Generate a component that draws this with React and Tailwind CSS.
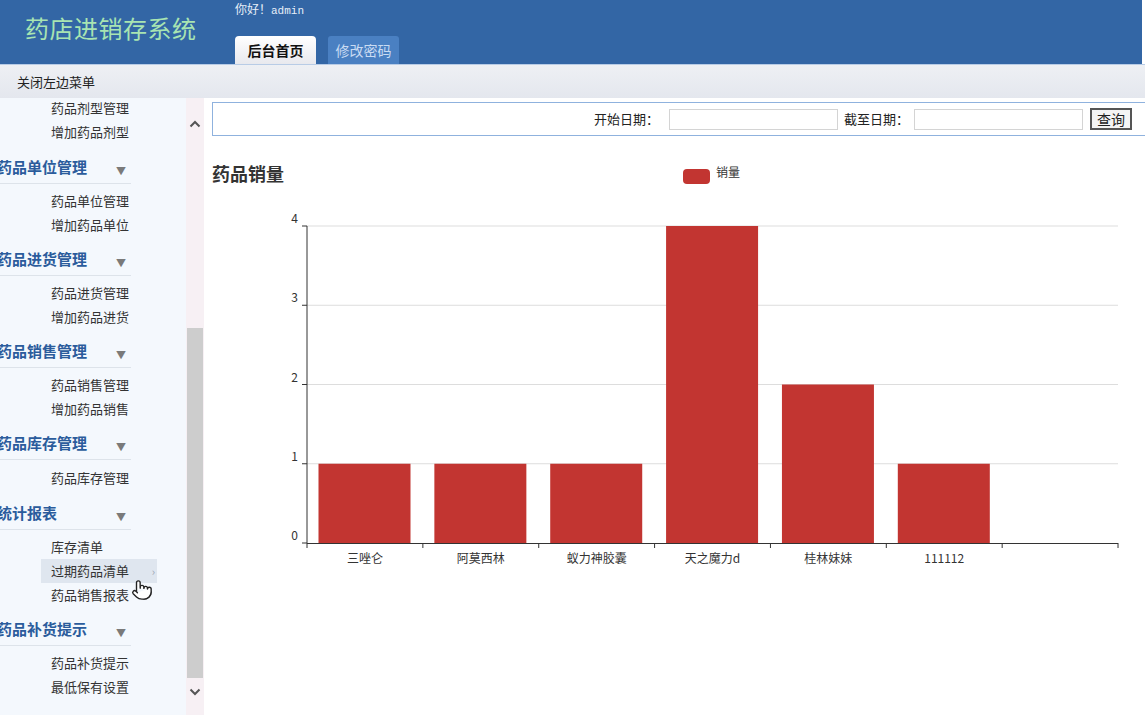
import React from "react";
import { Pointer } from "lucide-react";

const menu = [
    { title: null, items: ["药品剂型管理", "增加药品剂型"] },
    { title: "药品单位管理", items: ["药品单位管理", "增加药品单位"] },
    { title: "药品进货管理", items: ["药品进货管理", "增加药品进货"] },
    { title: "药品销售管理", items: ["药品销售管理", "增加药品销售"] },
    { title: "药品库存管理", items: ["药品库存管理"] },
    { title: "统计报表", items: ["库存清单", "过期药品清单", "药品销售报表"] },
    { title: "药品补货提示", items: ["药品补货提示", "最低保有设置"] },
];

const sales = [
    { name: "三唑仑", value: 1 },
    { name: "阿莫西林", value: 1 },
    { name: "蚁力神胶囊", value: 1 },
    { name: "天之魔力d", value: 4 },
    { name: "桂林妹妹", value: 2 },
    { name: "111112", value: 1 },
];

const font = { fontFamily: '"Noto Sans CJK SC", "Noto Sans", sans-serif' };

const SalesChart = () => {
    const x0 = 95;
    const y0 = 407;
    const step = 115.86;
    const unit = 79.25;
    const right = 906;

    return (
        <svg width="933" height="470" viewBox="0 0 933 470" fontFamily='"Noto Sans CJK SC", "Noto Sans", sans-serif'>
            <text x="0" y="45" fontSize="18" fontWeight="700" fill="#333">药品销量</text>

            {/* legend */}
            <rect x="471" y="33" width="27" height="15" rx="4" fill="#c23531" />
            <text x="504" y="41" fontSize="12" fill="#333">销量</text>

            {/* grid + y labels */}
            {[0, 1, 2, 3, 4].map((v) => {
                const y = y0 - v * unit;
                return (
                    <g key={v}>
                        {v > 0 && <line x1={x0} x2={right} y1={y} y2={y} stroke="#ddd" strokeWidth="1" />}
                        <line x1={x0 - 5} x2={x0} y1={y} y2={y} stroke="#333" strokeWidth="1" />
                        <text x={x0 - 9} y={y - 3} fontSize="12" fill="#333" textAnchor="end">{v}</text>
                    </g>
                );
            })}

            {/* bars */}
            {sales.map((s, i) => (
                <rect
                    key={s.name}
                    x={x0 + i * step + 11.5}
                    y={y0 - s.value * unit}
                    width="92"
                    height={s.value * unit}
                    fill="#c23531"
                />
            ))}

            {/* axes */}
            <line x1={x0} x2={x0} y1={y0 - 4 * unit} y2={y0} stroke="#333" strokeWidth="1" />
            <line x1={x0} x2={right} y1={y0 + 0.5} y2={y0 + 0.5} stroke="#333" strokeWidth="1" />
            {[0, 1, 2, 3, 4, 5, 6, 7].map((i) => (
                <line
                    key={i}
                    x1={x0 + i * step}
                    x2={x0 + i * step}
                    y1={y0}
                    y2={y0 + 5}
                    stroke="#333"
                    strokeWidth="1"
                />
            ))}
            {sales.map((s, i) => (
                <text
                    key={s.name}
                    x={x0 + i * step + step / 2}
                    y={y0 + 20}
                    fontSize="12"
                    fill="#333"
                    textAnchor="middle"
                >
                    {s.name}
                </text>
            ))}
        </svg>
    );
};

// padding per section so rows sit where the original menu had them
const sectionPad = (sec) => {
    if (!sec.title) return "pb-[8px]";
    if (sec.items.length === 1) return "pt-[6px] pb-[8px]";
    return "pt-[5px] pb-[7px]";
};

const Sidebar = () => (
    <div className="w-[186px] h-full bg-[#f4f8fd] overflow-hidden relative">
        <div className="-mt-[2px]">
            {menu.map((sec, si) => (
                <div key={si}>
                    {sec.title && (
                        <div className="w-[131px] h-[32px] border-b border-[#dde3ea] flex items-center justify-between">
                            <span className="-ml-[3px] text-[15px] font-bold text-[#2b5c9c] whitespace-nowrap">{sec.title}</span>
                            <span className="text-[10px] text-[#7a7a7a] pr-[5px] pt-[6px]">▼</span>
                        </div>
                    )}
                    <div className={sectionPad(sec)}>
                        {sec.items.map((it) => {
                            const hover = it === "过期药品清单";
                            return (
                                <div
                                    key={it}
                                    className={
                                        hover
                                            ? "ml-[41px] w-[116px] h-6 pl-[10px] flex items-center justify-between bg-[#dfe6ef] text-[13px] text-[#333]"
                                            : "ml-[41px] w-[116px] h-6 pl-[10px] flex items-center text-[13px] text-[#333]"
                                    }
                                >
                                    <span>{it}</span>
                                    {hover && <span className="text-[11px] text-[#9aa5b2] pr-[2px]">›</span>}
                                </div>
                            );
                        })}
                    </div>
                </div>
            ))}
        </div>
        <Pointer className="absolute left-[131px] top-[481px] text-[#222] fill-white" size={22} strokeWidth={1.5} />
    </div>
);

const Scrollbar = () => (
    <div className="w-[18px] h-full flex flex-col bg-[#f7f0f4]">
        <div className="h-[230px] flex justify-center pt-[22px]">
            <svg width="12" height="8" viewBox="0 0 12 8">
                <path d="M1.5 6.5 L6 2 L10.5 6.5" stroke="#555" strokeWidth="2" fill="none" />
            </svg>
        </div>
        <div className="h-[350px] ml-[1px] mr-[1px] bg-[#cdcdcd]" />
        <div className="flex-1 flex justify-center pt-[10px]">
            <svg width="12" height="8" viewBox="0 0 12 8">
                <path d="M1.5 1.5 L6 6 L10.5 1.5" stroke="#555" strokeWidth="2" fill="none" />
            </svg>
        </div>
    </div>
);

const App = () => {
    return (
        <div className="w-[1145px] h-[715px] overflow-hidden flex flex-col bg-white" style={font}>
            {/* header */}
            <div className="h-16 flex bg-[#3366a5] mr-[3px]">
                <div className="w-[235px] pl-[25px] pt-[10px]">
                    <span className="text-[24px] text-[#a8e4b2] tracking-[0.5px]">药店进销存系统</span>
                </div>
                <div className="flex flex-col justify-between">
                    <div className="text-[12px] text-[#e6eef8] leading-[16px] pt-[1px]">
                        你好！<span className="font-['Liberation_Mono'] text-[11px]">admin</span>
                    </div>
                    <div className="flex items-end gap-[12px]">
                        <div className="w-[81px] h-[28px] rounded-t-[4px] bg-gradient-to-b from-white to-[#e8e9ee] flex items-center justify-center text-[14px] font-bold text-[#111]">
                            后台首页
                        </div>
                        <div className="w-[71px] h-[28px] rounded-t-[3px] bg-[#4a80c2] flex items-center justify-center text-[14px] text-[#c9dbf2]">
                            修改密码
                        </div>
                    </div>
                </div>
            </div>

            {/* toolbar */}
            <div className="h-[34px] border-t border-[#b8cce6] bg-gradient-to-b from-[#eef0f4] to-[#e4e7ee] flex items-center pl-[17px] text-[13px] text-[#222]">
                关闭左边菜单
            </div>

            {/* body */}
            <div className="flex-1 flex min-h-0">
                <Sidebar />
                <Scrollbar />
                <div className="flex-1 pl-2 pt-1 flex flex-col">
                    <div className="h-[34px] border-y border-l border-[#8fb2de] flex items-center justify-end pr-[13px] text-[13px] text-[#222]">
                        <span className="mr-[10px]">开始日期：</span>
                        <div className="w-[169px] h-[21px] border border-[#d4d4d4] bg-white" />
                        <span className="ml-[6px] mr-[5px]">截至日期：</span>
                        <div className="w-[169px] h-[21px] border border-[#d4d4d4] bg-white" />
                        <div className="ml-[7px] h-[22px] w-[42px] border-2 border-[#555] bg-[#f4f4f4] flex items-center justify-center text-[14px] leading-none">
                            查询
                        </div>
                    </div>
                    <SalesChart />
                </div>
            </div>
        </div>
    );
};

export default App;
